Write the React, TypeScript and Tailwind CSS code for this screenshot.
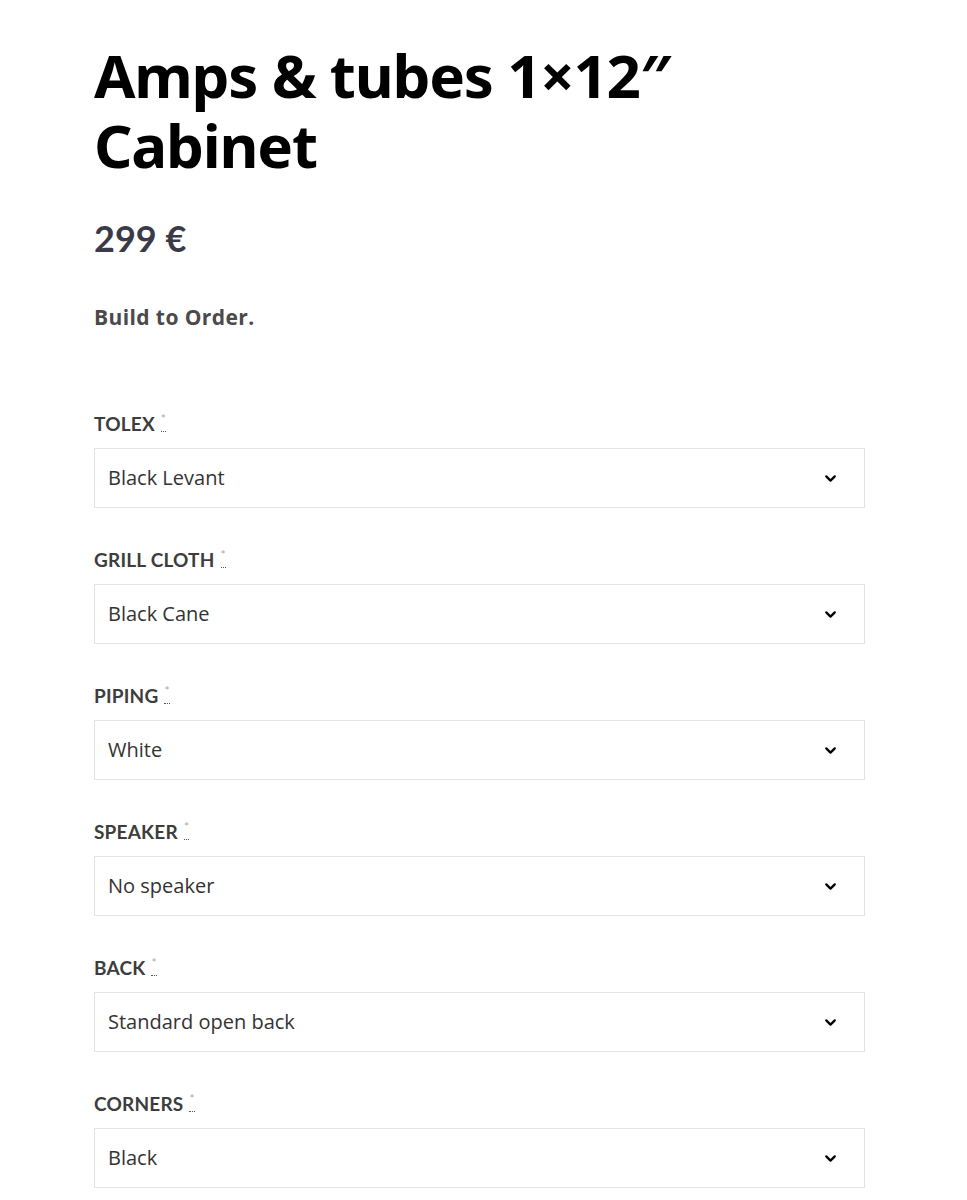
import { ChevronDown } from "lucide-react";

type Option = {
    label: string;
    value: string;
};

const options: Option[] = [
    { label: "TOLEX", value: "Black Levant" },
    { label: "GRILL CLOTH", value: "Black Cane" },
    { label: "PIPING", value: "White" },
    { label: "SPEAKER", value: "No speaker" },
    { label: "BACK", value: "Standard open back" },
    { label: "CORNERS", value: "Black" },
];

const Field = ({ option }: { option: Option }) => {
    return (
        <div className="flex flex-col">
            <label className="flex items-start text-[19px] font-bold leading-[28px] text-[#3d3d3d] tracking-[0.2px]">
                {option.label}
                <abbr
                    title="required"
                    className="ml-[6px] mt-[2px] h-[20px] border-b border-dotted border-[#555] text-[12px] font-normal leading-[14px] text-[#aaa] no-underline"
                >
                    *
                </abbr>
            </label>
            <div className="mt-[10px] flex h-[60px] w-[771px] items-center justify-between border border-[#e3e3e3] bg-white pl-[13px] pr-[25px]">
                <span className="font-['Open_Sans',sans-serif] text-[20px] text-[#333]">{option.value}</span>
                <ChevronDown size={17} strokeWidth={3.2} className="text-black" />
            </div>
        </div>
    );
};

export default function App() {
    return (
        <div className="min-h-[1200px] bg-white font-['Lato','Liberation_Sans',sans-serif]">
            <div className="pl-[94px] pt-[40px]">
                <h1 className="font-['Noto_Sans',sans-serif] text-[60px] font-bold leading-[70px] tracking-[-1.2px] text-black">
                    Amps &amp; tubes 1×12″
                    <br />
                    Cabinet
                </h1>
                <div className="mt-[38px] text-[36px] font-bold leading-[40px] text-[#3b3a48]">299 €</div>
                <p className="mt-[44px] font-['Open_Sans',sans-serif] text-[21px] font-bold leading-[30px] tracking-[0.4px] text-[#4a4a4a]">Build to Order.</p>
                <div className="mt-[78px] flex flex-col gap-[38px]">
                    {options.map((option) => (
                        <Field key={option.label} option={option} />
                    ))}
                </div>
            </div>
        </div>
    );
}
